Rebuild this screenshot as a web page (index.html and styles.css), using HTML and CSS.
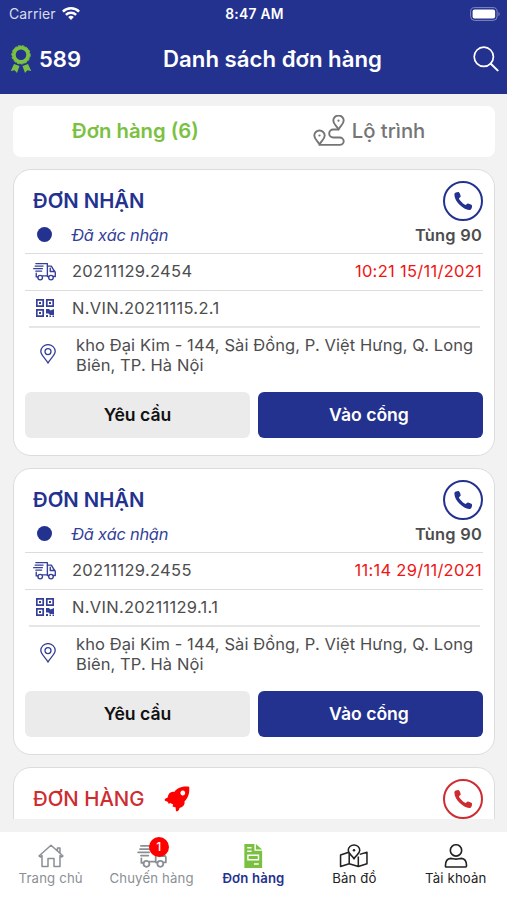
FILE: index.html
```html
<!DOCTYPE html>
<html lang="vi">
  <head>
    <meta charset="UTF-8" />
    <meta name="viewport" content="width=device-width, initial-scale=1.0" />
    <title>Danh sách đơn hàng</title>
    <link rel="stylesheet" href="styles.css">
  </head>
  <body>
    <!-- Shared icons -->
    <svg class="sprite" aria-hidden="true">
      <symbol id="icon-phone" viewBox="0 0 18 18">
        <path d="M.4 2C.4.700 3.800-.2 4.900.2c.8.4 1.900 3.300 1.800 4.400-.1.900-1.700 1.300-1.700 2 0 1.300 4.900 6.200 6.400 6.400.8.100 1.500-1.500 2.400-1.500 1.100 0 3.900 1 4.200 2 .3.900-.2 3.700-1.400 4.200C11 19.400-.2 10 .4 2z" fill="currentColor" />
      </symbol>
      <symbol id="icon-truck" viewBox="0 0 32 26">
        <g fill="none" stroke="currentColor" stroke-width="1.900" stroke-linecap="round" stroke-linejoin="round">
          <path d="M4 2h16v17h-7M7 20.500H4.500V15.500M3 5.500h11M1 9h12M4 12.500h8" />
          <path d="M20 5.500h5.500l4 6.500 1.500 2v6h-3M22 20h-2M24 8.500V13h6" />
          <circle cx="10" cy="21.500" r="3.200" />
          <circle cx="25" cy="21.500" r="3.200" />
        </g>
      </symbol>
      <symbol id="icon-qr" viewBox="0 0 18 18">
        <g fill="none" stroke="currentColor" stroke-width="1.700">
          <path d="M.8.8h6.400v6.400H.8zM10.800.8h6.400v6.400h-6.400zM.8 10.800h6.400v6.400H.8z" />
        </g>
        <path d="M3 3h2v2H3zM13 3h2v2h-2zM3 13h2v2H3zM10 10h3l1.500 1.500L18 10v6h-4l-1.500-1.500H10zM10 16h2v2h-2zM13.500 16.500h1.500v1.500h-1.500zM16.500 16.500H18v1.500h-1.500z" fill="currentColor" />
      </symbol>
      <symbol id="icon-pin" viewBox="0 0 16 20">
        <g fill="none" stroke="currentColor" stroke-width="1.300">
          <path d="M8 19C5.500 14.500.8 11 .8 7.500a7.200 6.900 0 0 1 14.400 0C15.200 11 10.500 14.500 8 19z" />
          <circle cx="8" cy="7.600" r="3" />
        </g>
      </symbol>
    </svg>

    <header class="header">
      <div class="status-bar">
        <div class="carrier">
          <span>Carrier</span>
          <svg class="wifi" viewBox="0 0 18 13">
            <g fill="none" stroke="#fff" stroke-width="2.500">
              <path d="M.9 4.700a11.500 11.500 0 0 1 16.200 0M3.900 7.900a7.300 7.300 0 0 1 10.200 0" />
            </g>
            <path d="M9 13L6.200 10.100a4 4 0 0 1 5.600 0z" fill="#fff" />
          </svg>
        </div>
        <span class="clock">8:47 AM</span>
        <svg class="battery" viewBox="0 0 30 14">
          <rect x=".6" y=".6" width="26.500" height="12.800" rx="4" fill="none" stroke="#8289c0" />
          <rect x="2.600" y="2.500" width="22.500" height="9" rx="2" fill="#fff" />
          <path d="M28.500 4.800c1.500.8 1.500 3.600 0 4.400z" fill="#8289c0" />
        </svg>
      </div>
      <div class="title-bar">
        <div class="points">
          <svg viewBox="0 0 22 28">
            <circle cx="11" cy="9.800" r="7.200" fill="none" stroke="#7ac142" stroke-width="3.800" />
            <circle cx="11" cy="9.800" r="9.200" fill="none" stroke="#7ac142" stroke-width="1" stroke-dasharray="2.500 1.500" />
            <path d="M4 19l5.500 2L7 28l-2.300-2.800L.8 26zM18 19l-5.500 2 2.500 7 2.300-2.800 3.900.8z" fill="#7ac142" />
          </svg>
          <span>589</span>
        </div>
        <h1>Danh sách đơn hàng</h1>
        <svg class="search" viewBox="0 0 26 26">
          <g fill="none" stroke="#fff" stroke-width="1.700" stroke-linecap="round">
            <circle cx="10.800" cy="10.800" r="9.600" />
            <path d="M17.800 17.800l6.800 6.600" stroke-width="2" />
          </g>
        </svg>
      </div>
    </header>

    <nav class="tabs">
      <a class="tab active">Đơn hàng (6)</a>
      <a class="tab route">
        <svg viewBox="0 0 32 32">
          <g fill="none" stroke="currentColor" stroke-width="1.900" stroke-linejoin="round">
            <path d="M6.500 29.500C5 26 1.300 24.300 1.300 20.500a5.200 5 0 0 1 10.400 0c0 3.800-3.700 5.500-5.200 9z" />
            <path d="M25.500 14.500c-1.500-3.500-5.200-5.200-5.200-9a5.200 5 0 0 1 10.400 0c0 3.800-3.700 5.500-5.200 9z" />
            <path d="M25.500 14.500h-5.300a4 4 0 0 0 0 8h6.500a4 3.700 0 0 1 0 7.400H6.500" stroke-linecap="round" />
          </g>
          <circle cx="6.500" cy="20.500" r="1.100" fill="currentColor" />
          <circle cx="25.500" cy="5.700" r="1.100" fill="currentColor" />
        </svg>
        <span>Lộ trình</span>
      </a>
    </nav>

    <main class="orders">
      <article class="card">
        <div class="card-head">
          <h2>ĐƠN NHẬN</h2>
          <a class="call"><svg><use href="#icon-phone" /></svg></a>
        </div>
        <div class="row status">
          <span class="row-icon"><i class="dot"></i></span>
          <em>Đã xác nhận</em>
          <strong>Tùng 90</strong>
        </div>
        <div class="row">
          <span class="row-icon"><svg class="truck"><use href="#icon-truck" /></svg></span>
          <span class="code">20211129.2454</span>
          <span class="time">10:21 15/11/2021</span>
        </div>
        <div class="row last">
          <span class="row-icon"><svg class="qr"><use href="#icon-qr" /></svg></span>
          <span class="code">N.VIN.20211115.2.1</span>
        </div>
        <div class="address">
          <svg class="pin"><use href="#icon-pin" /></svg>
          <p>kho Đại Kim - 144, Sài Đồng, P. Việt Hưng, Q. Long Biên, TP. Hà Nội</p>
        </div>
        <div class="actions">
          <button class="btn">Yêu cầu</button>
          <button class="btn primary">Vào cổng</button>
        </div>
      </article>

      <article class="card">
        <div class="card-head">
          <h2>ĐƠN NHẬN</h2>
          <a class="call"><svg><use href="#icon-phone" /></svg></a>
        </div>
        <div class="row status">
          <span class="row-icon"><i class="dot"></i></span>
          <em>Đã xác nhận</em>
          <strong>Tùng 90</strong>
        </div>
        <div class="row">
          <span class="row-icon"><svg class="truck"><use href="#icon-truck" /></svg></span>
          <span class="code">20211129.2455</span>
          <span class="time">11:14 29/11/2021</span>
        </div>
        <div class="row last">
          <span class="row-icon"><svg class="qr"><use href="#icon-qr" /></svg></span>
          <span class="code">N.VIN.20211129.1.1</span>
        </div>
        <div class="address">
          <svg class="pin"><use href="#icon-pin" /></svg>
          <p>kho Đại Kim - 144, Sài Đồng, P. Việt Hưng, Q. Long Biên, TP. Hà Nội</p>
        </div>
        <div class="actions">
          <button class="btn">Yêu cầu</button>
          <button class="btn primary">Vào cổng</button>
        </div>
      </article>

      <article class="card urgent">
        <div class="card-head">
          <h2>ĐƠN HÀNG</h2>
          <svg class="rocket" viewBox="0 0 26 26">
            <path fill="#f00" fill-rule="evenodd" d="M25.200.8c.3 5.700-.2 10-4.700 14.700.5 3.500-1.200 5.300-5 6.500-.3 1.700-1 3-2.700 3.500-1-.5-1.300-2.300-1-4l-3.300-1 .7-2-3-1.500-1.500 1c-.3-1-.5-2-1.700-2.500-1-.3-2-.5-2.500-1.500.8-1.300 1.500-1.900 3-2.200C4.300 7.500 6.500 5.300 10.300 6 13.500 1.500 19.500 0 25.200.8zM18.800 4.600a2.400 2.400 0 1 0 .01 0z" />
          </svg>
          <a class="call"><svg><use href="#icon-phone" /></svg></a>
        </div>
      </article>
    </main>

    <footer class="bottom-nav">
      <a class="nav-item">
        <svg viewBox="0 0 26 24">
          <path d="M1 12L13 1.300 25 12l-1.300 1L22 11.500V22.500H16V14.500H10v8H4V11.500L2.300 13zM19.500 6.500V4H22v5" fill="none" stroke="currentColor" stroke-width="1.500" stroke-linejoin="round" />
        </svg>
        <span>Trang chủ</span>
      </a>
      <a class="nav-item trips">
        <svg class="nav-truck"><use href="#icon-truck" /></svg>
        <span>Chuyến hàng</span>
        <b class="badge">1</b>
      </a>
      <a class="nav-item active">
        <svg viewBox="0 0 20 25">
          <path d="M1 0h10.500v7H19.500v18H1z" fill="#7ac142" />
          <path d="M13 0l6.500 5.800H13z" fill="#7ac142" />
          <path d="M4 4h4.500M4 7.500h4.500M4.700 11.800h11v4.700h-11zM11 20.800h5" fill="none" stroke="#fff" stroke-width="1.500" />
        </svg>
        <span>Đơn hàng</span>
      </a>
      <a class="nav-item dark">
        <svg viewBox="0 0 30 25">
          <g fill="none" stroke="currentColor" stroke-width="1.600" stroke-linejoin="round">
            <path d="M9.500 8.500L1 11.500v12l9-3 9.500 3 9-3v-12l-7.500 2.300M10 9.500v11M19.500 13v10.500" />
            <path d="M15 15.500c-1.500-3.500-6-5-6-9a6 5.500 0 0 1 12 0c0 4-4.500 5.500-6 9z" />
          </g>
          <circle cx="15" cy="6.500" r="1.300" fill="currentColor" />
        </svg>
        <span>Bản đồ</span>
      </a>
      <a class="nav-item dark">
        <svg viewBox="0 0 24 25">
          <g fill="none" stroke="currentColor" stroke-width="1.700" stroke-linejoin="round">
            <circle cx="12" cy="6.700" r="5.900" />
            <path d="M2 24c-.8 0-1-.5-1-1.300C1 18 3 15.300 6.500 15c2 0 3 .8 5.500.8s3.500-.8 5.500-.8c3.500.3 5.500 3 5.500 7.700 0 .8-.2 1.300-1 1.300z" />
          </g>
        </svg>
        <span>Tài khoản</span>
      </a>
    </footer>
  </body>
</html>
```
FILE: styles.css
```css
* {
  box-sizing: border-box;
}

body {
  font-family: Inter, "Noto Sans", sans-serif;
  background: #f2f2f2;
  color: #4d4d4d;
  margin: 0;
  height: 100vh;
  display: flex;
  flex-direction: column;
  overflow: hidden;
}

h1,
h2,
p {
  margin: 0;
}

svg {
  display: block;
  flex: none;
}

.sprite {
  display: none;
}

/* Header */
.header {
  background: #24328f;
  color: #fff;
  height: 94px;
  flex: none;
}

.status-bar {
  display: grid;
  grid-template-columns: 1fr auto 1fr;
  align-items: center;
  height: 27px;
  padding: 0 7px 0 9px;
  font-size: 14px;
}

.carrier {
  display: flex;
  align-items: center;
  gap: 6px;
  color: #d9dcee;
  letter-spacing: 0.1px;
}

.wifi {
  width: 18px;
  height: 13px;
}

.clock {
  font-weight: 600;
  font-size: 13.8px;
  letter-spacing: 0.3px;
}

.battery {
  width: 30px;
  height: 14px;
  justify-self: end;
}

.title-bar {
  display: grid;
  grid-template-columns: 1fr auto 1fr;
  align-items: center;
  height: 63px;
  padding: 0 8px 0 10px;
}

.points {
  display: flex;
  align-items: center;
  gap: 7px;
  font-size: 22px;
  font-weight: 600;
}

.points svg {
  width: 22px;
  height: 28px;
}

.title-bar h1 {
  margin-left: 36px;
  font-size: 22.2px;
  font-weight: 600;
  white-space: nowrap;
}

.search {
  width: 26px;
  height: 26px;
  justify-self: end;
}

/* Tabs */
.tabs {
  display: flex;
  flex: none;
  height: 51px;
  margin: 12px 12px 0 13px;
  padding-bottom: 2px;
  background: #fff;
  border-radius: 8px;
}

.tab {
  display: flex;
  align-items: center;
  justify-content: center;
  width: 50%;
  gap: 7px;
  font-size: 20.3px;
  font-weight: 500;
  color: #757575;
}

.tab.active {
  color: #7ac142;
  font-weight: 600;
  padding-left: 4px;
}

.tab.route {
  padding-right: 11px;
}

.tab svg {
  width: 32px;
  height: 32px;
}

/* Orders */
.orders {
  flex: 1;
  min-height: 0;
  overflow: hidden;
  margin: 12px 12px 13px 13px;
}

.card {
  height: 287px;
  margin-bottom: 12px;
  padding: 0 11px;
  background: #fff;
  border: 1.5px solid #dcdcdc;
  border-radius: 18px;
}

.card-head {
  display: flex;
  align-items: center;
  height: 50px;
  padding: 12px 0 0 8px;
}

.card-head h2 {
  padding-bottom: 2px;
  font-size: 20.3px;
  font-weight: 600;
  color: #24328f;
}

.call {
  display: flex;
  align-items: center;
  justify-content: center;
  width: 40px;
  height: 40px;
  margin-left: auto;
  border: 2px solid #24328f;
  border-radius: 50%;
  color: #24328f;
}

.call svg {
  width: 18px;
  height: 18px;
}

.row {
  display: flex;
  align-items: center;
  height: 37px;
  padding: 0 1px 2px 0;
  border-bottom: 1px solid #dcdcdc;
  font-size: 16.5px;
}

.row.status {
  height: 34px;
  padding-bottom: 4px;
  font-size: 16.4px;
}

.row.last {
  border-bottom: 0;
  height: 36px;
}

.row em {
  color: #343f98;
  letter-spacing: -0.25px;
}

.row strong {
  margin-left: auto;
  font-weight: 600;
  letter-spacing: 0.25px;
}

.row-icon {
  display: flex;
  justify-content: center;
  width: 39px;
  margin-right: 8px;
}

.dot {
  width: 15px;
  height: 15px;
  border-radius: 50%;
  background: #24328f;
}

.truck {
  width: 23px;
  height: 19px;
  color: #343f98;
}

.qr {
  width: 18px;
  height: 18px;
  color: #343f98;
}

.code {
  letter-spacing: 0.3px;
}

.time {
  margin-left: auto;
  color: #f01414;
  letter-spacing: 0.28px;
}

.address {
  display: flex;
  align-items: center;
  height: 65px;
  margin: -1px 3px 1px 4px;
  padding: 0 0 10px 11px;
  border-top: 2px solid #e6e6e6;
  font-size: 16.5px;
  letter-spacing: 0.09px;
  line-height: 20px;
}

.pin {
  width: 16px;
  height: 20px;
  margin: -2px 20px 0 0;
  color: #343f98;
}

.actions {
  display: grid;
  grid-template-columns: 1fr 1fr;
  gap: 8px;
}

.btn {
  height: 46px;
  padding: 0 0 2px;
  border: none;
  border-radius: 6px;
  background: #ebebeb;
  color: #111;
  font-family: inherit;
  font-size: 17.6px;
  font-weight: 600;
}

.btn.primary {
  padding-right: 3px;
  background: #24328f;
  color: #fff;
}

.card.urgent h2 {
  color: #ce2c30;
  font-weight: 500;
  font-size: 20.4px;
}

.urgent .call {
  color: #ce2c30;
  border-color: #ce2c30;
}

.rocket {
  width: 26px;
  height: 26px;
  margin-left: 19px;
}

/* Bottom navigation */
.bottom-nav {
  display: grid;
  grid-template-columns: repeat(5, 1fr);
  flex: none;
  height: 68px;
  background: #fff;
}

.nav-item {
  position: relative;
  display: flex;
  flex-direction: column;
  align-items: center;
  padding-top: 12px;
  font-size: 13.2px;
  letter-spacing: 0.15px;
  line-height: 20px;
  color: #8a8f94;
  white-space: nowrap;
}

.nav-item svg {
  height: 24px;
  width: 30px;
}

.nav-item.trips {
  right: 0.5px;
}

.nav-item.active {
  color: #24328f;
  font-weight: 600;
}

.nav-item.dark {
  right: 0.5px;
  color: #222;
}

.badge {
  position: absolute;
  top: 5px;
  left: 48px;
  width: 20px;
  height: 20px;
  border-radius: 50%;
  background: #f00;
  color: #fff;
  font-size: 12px;
  font-weight: 500;
  text-align: center;
}
```
